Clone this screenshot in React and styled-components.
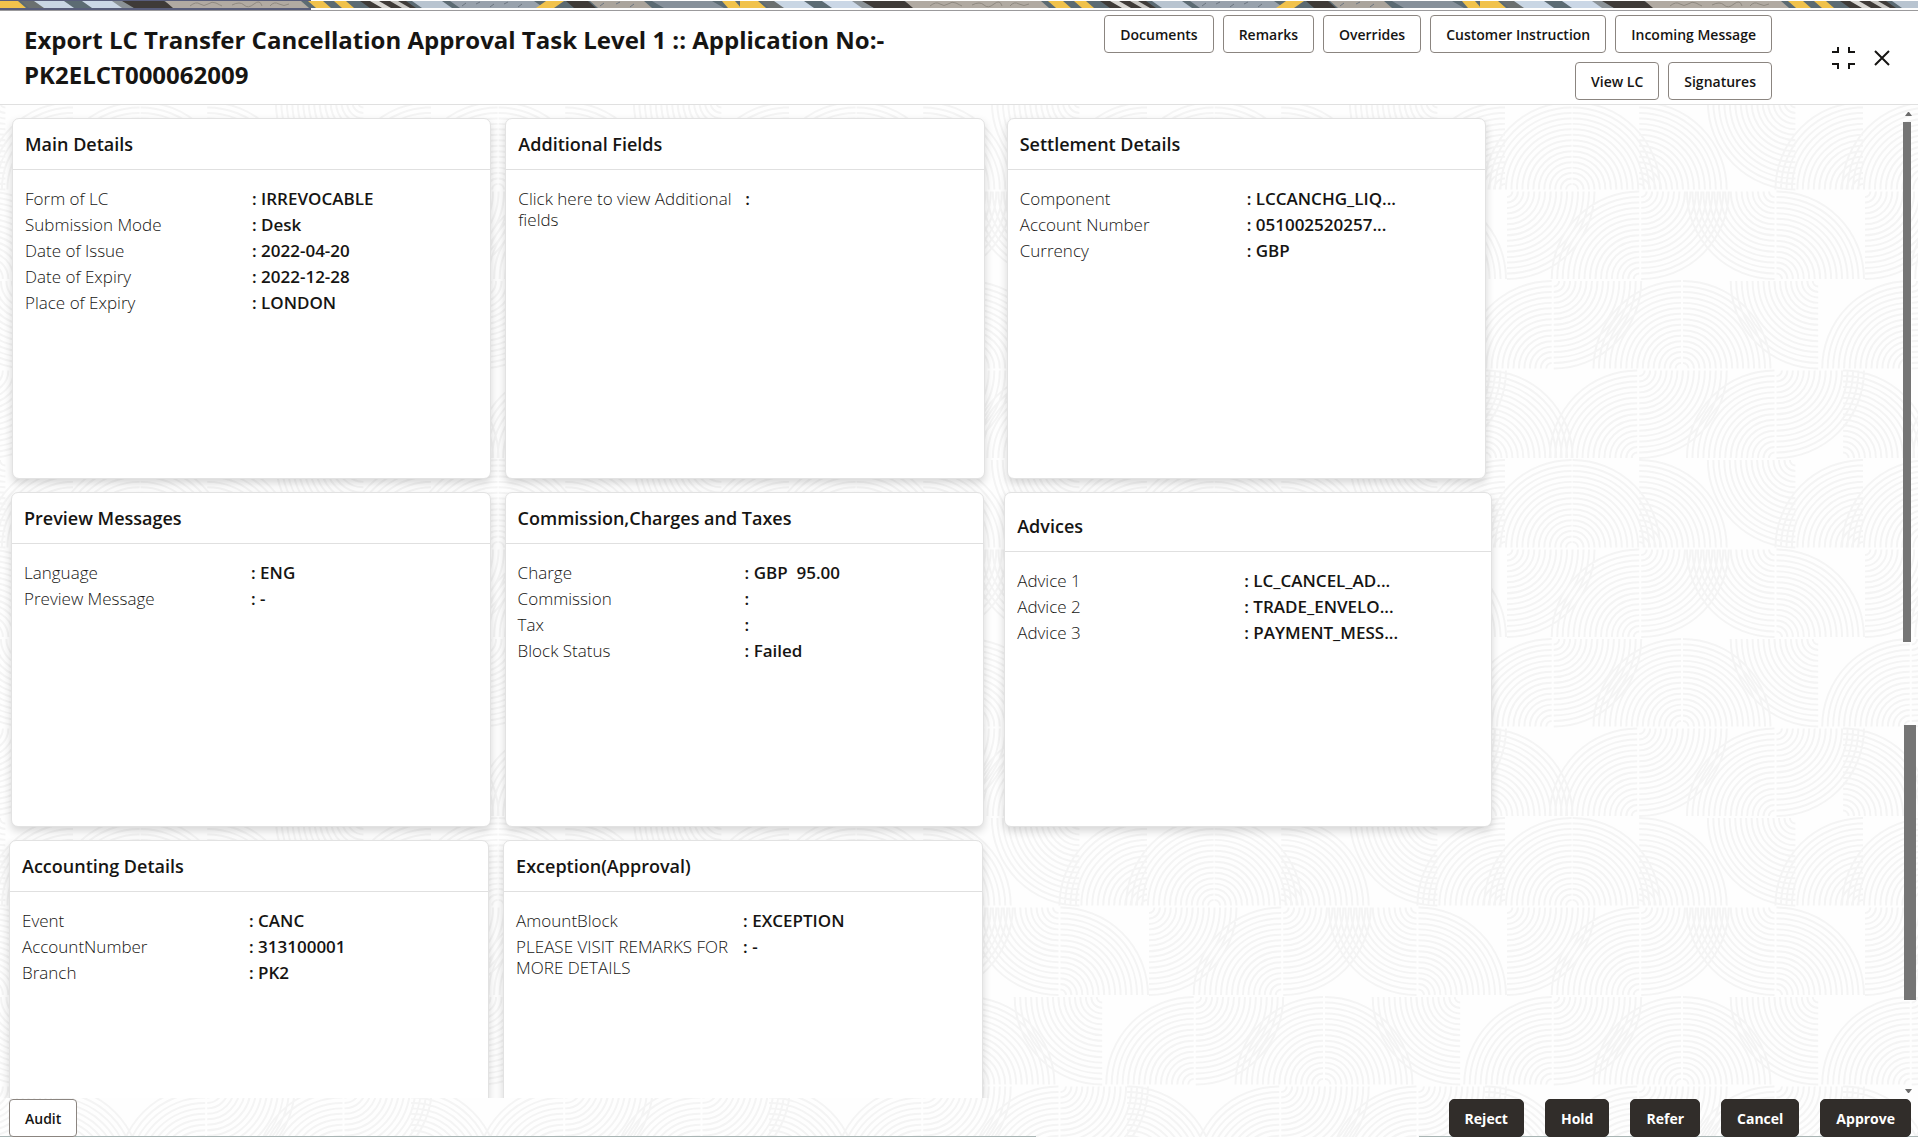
import React from 'react';
import styled, { createGlobalStyle } from 'styled-components';

// Quarter circles of the background tile: [centre x, centre y, sweep corner].
// The corner tells on which side of the quarter its centre lies.
const TILE = 360;
const QUARTERS = [
  [72, 89, 'BR'],
  [73, 89, 'BL'],
  [140, 89, 'BL'],
  [297, 1, 'TR'],
  [365, 89, 'BR'],
  [7, 91, 'TL'],
  [140, 179, 'BR'],
  [142, 91, 'TL'],
  [276, 91, 'TR'],
  [278, 179, 'BL'],
  [52, 269, 'BR'],
  [54, 181, 'TL'],
  [182, 269, 'BR'],
  [184, 269, 'BL'],
  [320, 181, 'TR'],
  [138, 359, 'BR'],
  [140, 271, 'TL'],
  [276, 359, 'BR'],
  [278, 271, 'TL'],
  [345, 359, 'BL'],
];

const arc = (x, y, corner, r) => {
  const dx = corner[1] === 'R' ? -r : r;
  const dy = corner[0] === 'B' ? -r : r;
  const sweep = corner === 'BL' || corner === 'TR' ? 0 : 1;
  return `M${x + dx} ${y}A${r} ${r} 0 0 ${sweep} ${x} ${y + dy}`;
};

const arcs = QUARTERS.flatMap(([x, y, corner]) =>
  [x - TILE, x, x + TILE].flatMap(cx =>
    Array.from({ length: 16 }, (_, i) => arc(cx, y, corner, (i + 1) * 5.5))
  )
).join('');

const tileSvg = `<svg xmlns="http://www.w3.org/2000/svg" viewBox="0 0 ${TILE} ${TILE}" width="358" height="358"><path d="${arcs}" fill="none" stroke="#f4f4f4" stroke-width="2"/></svg>`;
const tileImage = `url("data:image/svg+xml,${encodeURIComponent(tileSvg)}")`;

const GlobalStyle = createGlobalStyle`
  * {
    box-sizing: border-box;
  }
  body {
    margin: 0;
    overflow: hidden;
    color: #161513;
    background: #fefefe;
    font-family: 'Open Sans', 'Noto Sans', sans-serif;
  }
`;

const Page = styled.div`
  display: flex;
  flex-direction: column;
  height: 100vh;
  background: #fefefe ${tileImage} 68px 101px / 358px 358px;
`;

const Banner = styled.div`
  height: 11px;
  padding-top: 1px;
  background: linear-gradient(to right, #585d7b 0 311px, #fefefe 311px);
  border-bottom: 1px solid #9b9a9c;

  svg {
    display: block;
    width: 100%;
    height: 7px;
  }
`;

const Header = styled.header`
  display: flex;
  align-items: flex-start;
  height: 94px;
  padding: 4px 28px 0 24px;
  background: #fff;
  border-bottom: 1px solid #e0e0e0;
`;

const PageTitle = styled.h1`
  flex: 1;
  max-width: 900px;
  margin: 7px auto 0 0;
  font-size: 24px;
  font-weight: 700;
  line-height: 35px;
`;

const HeaderActions = styled.div`
  display: flex;
  flex-wrap: wrap;
  justify-content: flex-end;
  gap: 9px;
  width: 680px;
  margin-right: 59px;
`;

const Button = styled.button`
  height: 38px;
  padding: 0 15px;
  color: #161513;
  background: #fff;
  border: 1px solid #8b8580;
  border-radius: 4px;
  font-family: inherit;
  font-size: 14px;
  font-weight: 600;
`;

const PrimaryButton = styled(Button)`
  color: #fff;
  background: #312d2a;
  border-color: #312d2a;
  border-radius: 5px;
  font-weight: 700;
`;

const WindowControls = styled.div`
  display: flex;
  align-items: center;
  gap: 18px;
  margin-top: 31px;
`;

const IconButton = styled.button`
  padding: 0;
  background: none;
  border: 0;

  svg {
    display: block;
  }
`;

const Body = styled.div`
  display: flex;
  flex: 1;
  min-height: 0;
`;

const Content = styled.main`
  flex: 1;
  margin-right: -15px;
  overflow: hidden;
`;

const CardRow = styled.div`
  display: grid;
  grid-template-columns: ${props => props.$columns};
  align-items: start;
  padding-left: ${props => props.$left}px;
  margin-top: 13px;

  > :nth-child(2) {
    grid-column: 3;
  }
  > :nth-child(3) {
    grid-column: 5;
  }
`;

const CardBox = styled.section`
  height: ${props => props.$height}px;
  background: #fff;
  border: 1px solid #e2e2e2;
  border-radius: 7px;
  box-shadow: 0 4px 8px rgba(0, 0, 0, 0.16);
`;

const CardTitle = styled.h2`
  display: flex;
  align-items: flex-end;
  height: ${props => (props.$tall ? 59 : 51)}px;
  margin: 0;
  padding: 0 12px 12px;
  border-bottom: 1px solid #e0e0e0;
  font-size: 18px;
  font-weight: 600;
  line-height: 26px;
`;

const Fields = styled.dl`
  display: grid;
  grid-template-columns: 227px 1fr;
  row-gap: 5px;
  margin: 0;
  padding: 18px 12px;
  font-size: 17px;
  line-height: 21px;

  dt {
    font-weight: 300;
  }
  dd {
    margin: 0;
    font-weight: 600;
    white-space: pre;
  }
`;

const Rail = styled.div`
  display: flex;
  flex-direction: column;
  align-items: flex-start;
  width: 15px;
  padding: 7px 0 5px;

  svg {
    margin-left: 2px;
  }
`;

const Thumb = styled.div`
  width: ${props => props.$width}px;
  height: ${props => props.$share}%;
  margin-bottom: 83px;
  background: #757575;

  & + & {
    margin: 0 0 auto 1px;
  }
`;

const Footer = styled.footer`
  display: flex;
  align-items: flex-end;
  justify-content: space-between;
  height: 39px;
  padding: 0 7px 0 9px;
  background: linear-gradient(
      to right,
      #a9b5b4 0 54%,
      transparent 54% 74%,
      #a9b5b4 74%
    )
    bottom / 100% 1px no-repeat;
`;

const Decisions = styled.div`
  display: flex;
  gap: 21px;
`;

// x, width, slant and colour of the woven stripes, left to right
const STRIPES = [
  [0, 740, 0, '#5c6b73'],
  [-8, 26, 8, '#f1c24c'],
  [21, 24, 8, '#6b7070'],
  [34, 30, 10, '#c9d6e4'],
  [82, 36, 10, '#cbd7e6'],
  [112, 12, 10, '#8b9297'],
  [122, 42, 12, '#3f3b38'],
  [165, 136, 8, '#b1aaa2'],
  [308, 15, 8, '#f1c24c'],
  [334, 12, 8, '#f1c24c'],
  [360, 46, 10, '#3f3b38'],
  [370, 9, 12, '#d8d6d2'],
  [390, 8, 12, '#c8c6c2'],
  [412, 30, 10, '#b8c4d0'],
  [450, 84, 10, '#98a1ac'],
  [546, 18, -10, '#f1c24c'],
  [566, 22, 8, '#3f3b38'],
  [590, 54, 8, '#aaa49c'],
  [652, 60, 12, '#86909a'],
  [722, 13, 6, '#f1c24c'],
];

const Weave = () => (
  <svg aria-hidden="true">
    <defs>
      <pattern id="weave" width="740" height="7" patternUnits="userSpaceOnUse">
        {STRIPES.map(([x, width, slant, fill]) => (
          <polygon
            key={`${x}-${width}`}
            fill={fill}
            points={`${x},0 ${x + width},0 ${x + width + slant},7 ${x + slant},7`}
          />
        ))}
        <path
          d="M190 5q6-5 10-2t8 0 8-1 6 3M232 4q8-4 12 0t10-1 8 2M270 5q4-5 9-2t10 0"
          fill="none"
          stroke="#8f8981"
        />
        <path
          d="M462 5l4-3M476 3l4-2M490 6l4-3M504 3l4-2M518 6l4-3M600 5l4-3M616 3l4-2M630 6l4-3"
          stroke="#6d7681"
        />
      </pattern>
    </defs>
    <rect width="100%" height="7" fill="url(#weave)" />
  </svg>
);

const Card = ({ title, height, fields, tall }) => (
  <CardBox $height={height}>
    <CardTitle $tall={tall}>{title}</CardTitle>
    <Fields>
      {fields.map(([label, value]) => (
        <React.Fragment key={label}>
          <dt>{label}</dt>
          <dd>{`: ${value}`}</dd>
        </React.Fragment>
      ))}
    </Fields>
  </CardBox>
);

const ROWS = [
  {
    left: 12,
    columns: '25.15% 14px 25.15% 22px 25.15%',
    height: 361,
    cards: [
      {
        title: 'Main Details',
        fields: [
          ['Form of LC', 'IRREVOCABLE'],
          ['Submission Mode', 'Desk'],
          ['Date of Issue', '2022-04-20'],
          ['Date of Expiry', '2022-12-28'],
          ['Place of Expiry', 'LONDON'],
        ],
      },
      {
        title: 'Additional Fields',
        fields: [['Click here to view Additional fields', '']],
      },
      {
        title: 'Settlement Details',
        fields: [
          ['Component', 'LCCANCHG_LIQ...'],
          ['Account Number', '051002520257...'],
          ['Currency', 'GBP'],
        ],
      },
    ],
  },
  {
    left: 11,
    columns: '25.15% 14px 25.15% 20px 25.6%',
    height: 335,
    cards: [
      {
        title: 'Preview Messages',
        fields: [
          ['Language', 'ENG'],
          ['Preview Message', '-'],
        ],
      },
      {
        title: 'Commission,Charges and Taxes',
        fields: [
          ['Charge', 'GBP  95.00'],
          ['Commission', ''],
          ['Tax', ''],
          ['Block Status', 'Failed'],
        ],
      },
      {
        title: 'Advices',
        tall: true,
        fields: [
          ['Advice 1', 'LC_CANCEL_AD...'],
          ['Advice 2', 'TRADE_ENVELO...'],
          ['Advice 3', 'PAYMENT_MESS...'],
        ],
      },
    ],
  },
  {
    left: 9,
    columns: '25.15% 14px 25.15%',
    height: 335,
    cards: [
      {
        title: 'Accounting Details',
        fields: [
          ['Event', 'CANC'],
          ['AccountNumber', '313100001'],
          ['Branch', 'PK2'],
        ],
      },
      {
        title: 'Exception(Approval)',
        fields: [
          ['AmountBlock', 'EXCEPTION'],
          ['PLEASE VISIT REMARKS FOR MORE DETAILS', '-'],
        ],
      },
    ],
  },
];

const HEADER_ACTIONS = [
  'Documents',
  'Remarks',
  'Overrides',
  'Customer Instruction',
  'Incoming Message',
  'View LC',
  'Signatures',
];

const DECISIONS = ['Reject', 'Hold', 'Refer', 'Cancel', 'Approve'];

export default function App() {
  return (
    <Page>
      <GlobalStyle />
      <Banner>
        <Weave />
      </Banner>
      <Header>
        <PageTitle>
          Export LC Transfer Cancellation Approval Task Level 1 :: Application
          No:- PK2ELCT000062009
        </PageTitle>
        <HeaderActions>
          {HEADER_ACTIONS.map(name => (
            <Button key={name} type="button">
              {name}
            </Button>
          ))}
        </HeaderActions>
        <WindowControls>
          <IconButton type="button" aria-label="Collapse">
            <svg width="25" height="24" viewBox="0 0 25 24">
              <path
                d="M1 6h6V1M24 6h-6V1M1 18h6v5M24 18h-6v5"
                fill="none"
                stroke="#161513"
                strokeWidth="2"
              />
            </svg>
          </IconButton>
          <IconButton type="button" aria-label="Close">
            <svg width="16" height="16" viewBox="0 0 16 16">
              <path d="M1 1l14 14M15 1L1 15" stroke="#161513" strokeWidth="2" />
            </svg>
          </IconButton>
        </WindowControls>
      </Header>
      <Body>
        <Content>
          {ROWS.map(row => (
            <CardRow key={row.left} $left={row.left} $columns={row.columns}>
              {row.cards.map(card => (
                <Card key={card.title} height={row.height} {...card} />
              ))}
            </CardRow>
          ))}
        </Content>
        <Rail>
          <svg width="7" height="10" viewBox="0 0 7 10" aria-hidden="true">
            <path d="M0 4h7L4 0H3z" fill="#6b6b6b" />
          </svg>
          <Thumb $width={8} $share={53} />
          <Thumb $width={12} $share={28} />
          <svg width="7" height="4" viewBox="0 0 7 4" aria-hidden="true">
            <path d="M0 0h7L4 4H3z" fill="#6b6b6b" />
          </svg>
        </Rail>
      </Body>
      <Footer>
        <Button type="button">Audit</Button>
        <Decisions>
          {DECISIONS.map(name => (
            <PrimaryButton key={name} type="button">
              {name}
            </PrimaryButton>
          ))}
        </Decisions>
      </Footer>
    </Page>
  );
}
